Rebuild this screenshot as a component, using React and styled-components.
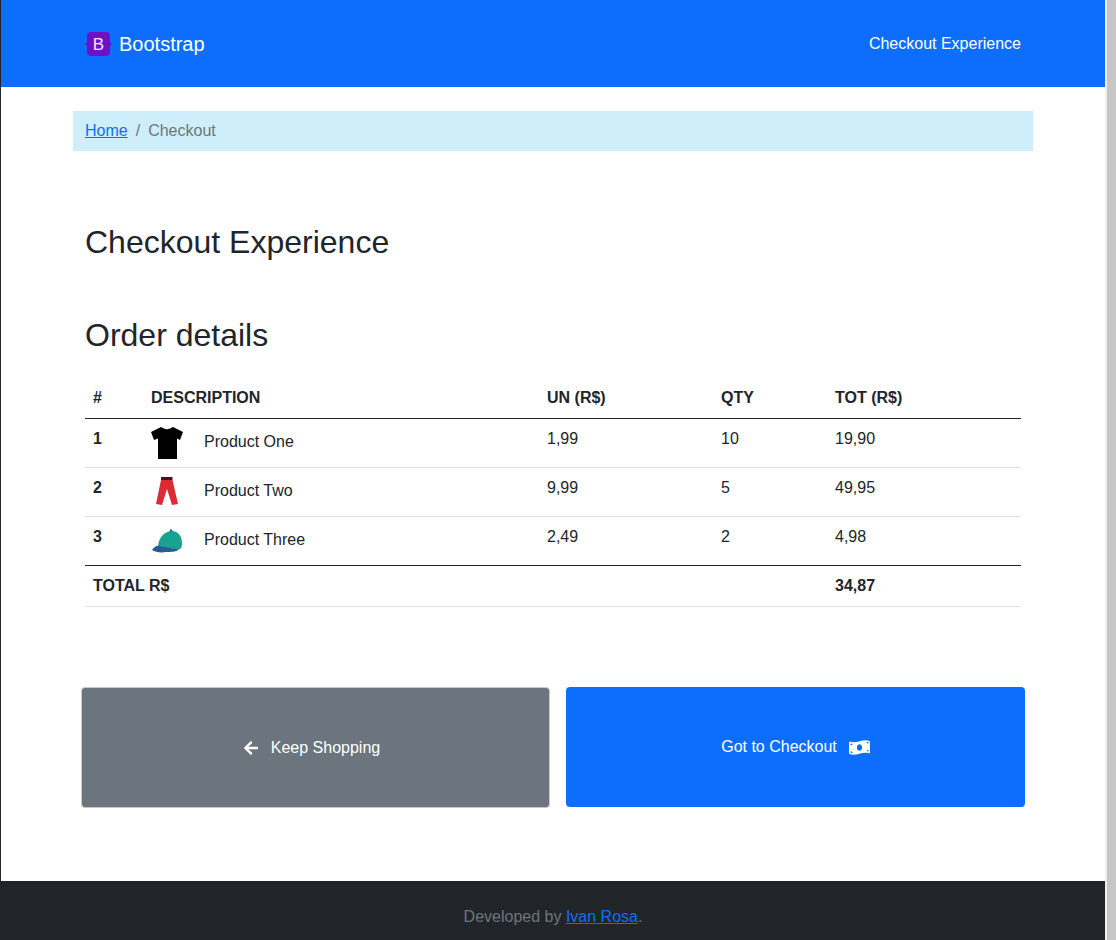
import React from "react";
import styled, { createGlobalStyle } from "styled-components";
import { FaArrowLeft, FaMoneyBillWave } from "react-icons/fa";

const GlobalStyle = createGlobalStyle`
  html, body {
    margin: 0;
    padding: 0;
    background: #fff;
  }
  body {
    font-family: "Liberation Sans", Arial, sans-serif;
    font-size: 16px;
    line-height: 24px;
    color: #212529;
  }
  * {
    box-sizing: border-box;
  }
`;

const Frame = styled.div`
  display: flex;
  height: 940px;
  overflow: hidden;
  border-left: 1px solid #212529;
`;

const Page = styled.div`
  flex: 1;
  min-width: 0;
`;

const Scrollbar = styled.div`
  flex: 0 0 11px;
  background: #c6c6c6;
  border-left: 2px solid #f1f1e4;
`;

const Container = styled.div`
  width: 960px;
  margin: 0 auto;
  padding: 0 12px;
`;

const NavBar = styled.header`
  height: 87px;
  background: #0d6efd;
  color: #fff;
`;

const NavInner = styled(Container)`
  height: 87px;
  display: flex;
  align-items: center;
  justify-content: space-between;
`;

const Brand = styled.div`
  display: flex;
  align-items: center;
  gap: 7px;
  font-size: 20px;
`;

const Crumbs = styled.nav`
  width: 960px;
  height: 40px;
  margin: 24px auto 0;
  padding: 8px 12px;
  display: flex;
  background: #cfeefb;
`;

const TextLink = styled.a`
  color: #0d6efd;
  text-decoration: underline;
`;

const CrumbSep = styled.span`
  color: #6c757d;
  padding: 0 8px;
`;

const CrumbActive = styled.span`
  color: #6c757d;
`;

const Title = styled.h1`
  margin: 72px 0 0;
  font-size: 32px;
  line-height: 38px;
  font-weight: 400;
`;

const SubTitle = styled.h2`
  margin: 55px 0 0;
  font-size: 32px;
  line-height: 38px;
  font-weight: 400;
`;

const Table = styled.table`
  width: 936px;
  margin-top: 24px;
  border-collapse: collapse;
  table-layout: fixed;
`;

const HeadCell = styled.th`
  padding: 8px;
  text-align: left;
  font-weight: 700;
  border-bottom: 1px solid #212529;
`;

const Cell = styled.td`
  padding: 8px;
  vertical-align: top;
  border-bottom: 1px solid ${(p) => (p.$dark ? "#212529" : "#dee2e6")};
  font-weight: ${(p) => (p.$bold ? 700 : 400)};
`;

const TotalCell = styled.td`
  padding: 8px;
  font-weight: 700;
  border-bottom: 1px solid #dee2e6;
`;

const Thumb = styled.svg`
  display: inline-block;
  width: 32px;
  height: 32px;
  margin-right: 21px;
  vertical-align: middle;
`;

const Actions = styled.div`
  display: flex;
  align-items: flex-start;
  gap: 16px;
  margin: 80px -4px 0;
`;

const ActionButton = styled.button`
  flex: 1;
  height: ${(p) => (p.$secondary ? "121px" : "120px")};
  padding: ${(p) => (p.$secondary ? "0 8px 0 0" : "0")};
  display: flex;
  align-items: center;
  justify-content: center;
  gap: 12px;
  font: inherit;
  color: #fff;
  background: ${(p) => (p.$secondary ? "#6c757d" : "#0d6efd")};
  border: ${(p) => (p.$secondary ? "1px solid #c8c8c8" : "0")};
  border-radius: 4px;
`;

const Footer = styled.footer`
  height: 59px;
  margin-top: 73px;
  padding-top: 24px;
  text-align: center;
  color: #6c757d;
  background: #212529;
`;

const BrandLogo = () => (
  <svg width="27" height="26" viewBox="0 0 27 26">
    <path d="M6 1h15a4 4 0 0 1 4 4v6l2 2-2 2v6a4 4 0 0 1-4 4H6a4 4 0 0 1-4-4v-6l-2-2 2-2V5a4 4 0 0 1 4-4z" fill="#6f10c8" />
    <text x="13.5" y="18.5" textAnchor="middle" fontSize="17" fontFamily="Liberation Sans, sans-serif" fill="#f3e6ff">B</text>
  </svg>
);

const Shirt = () => (
  <Thumb viewBox="0 0 32 32">
    <path d="M10 0l3 1.5q3 1.5 6 0L22 0l10 5-3 8-3-1.5V32H7V11.5L3 13 0 5z" fill="#000" />
  </Thumb>
);

const Pants = () => (
  <Thumb viewBox="0 0 32 32">
    <path d="M10 4h11.5l5.5 24-6 1-5-16-5 16-6-1z" fill="#dc2b35" />
    <path d="M10 1h11.5v3H10z" fill="#4a1218" />
  </Thumb>
);

const Cap = () => (
  <Thumb viewBox="0 0 32 32">
    <path d="M7 21C8 11 15 6 21 6c6 0 10 5 10 12 0 3-1 6-2 6-7 1-15-2-22-3z" fill="#17a291" />
    <path d="M1 25c2-3 5-5 8-4 7 1 14 3 19 3-2 3-8 3-13 3-5 1-11 0-14-2z" fill="#2a5a92" />
    <circle cx="20" cy="5.5" r="1.2" fill="#2a5a92" />
  </Thumb>
);

const products = [
  { id: 1, name: "Product One", unit: "1,99", qty: "10", total: "19,90", Icon: Shirt },
  { id: 2, name: "Product Two", unit: "9,99", qty: "5", total: "49,95", Icon: Pants },
  { id: 3, name: "Product Three", unit: "2,49", qty: "2", total: "4,98", Icon: Cap },
];

const App = () => {
  return (
    <Frame>
      <GlobalStyle />
      <Page>
        <NavBar>
          <NavInner>
            <Brand>
              <BrandLogo />
              Bootstrap
            </Brand>
            <span>Checkout Experience</span>
          </NavInner>
        </NavBar>
        <Crumbs>
          <TextLink href="#">Home</TextLink>
          <CrumbSep>/</CrumbSep>
          <CrumbActive>Checkout</CrumbActive>
        </Crumbs>
        <Container>
          <Title>Checkout Experience</Title>
          <SubTitle>Order details</SubTitle>
          <Table>
            <colgroup>
              <col style={{ width: 58 }} />
              <col style={{ width: 396 }} />
              <col style={{ width: 174 }} />
              <col style={{ width: 114 }} />
              <col style={{ width: 194 }} />
            </colgroup>
            <thead>
              <tr>
                <HeadCell>#</HeadCell>
                <HeadCell>DESCRIPTION</HeadCell>
                <HeadCell>UN (R$)</HeadCell>
                <HeadCell>QTY</HeadCell>
                <HeadCell>TOT (R$)</HeadCell>
              </tr>
            </thead>
            <tbody>
              {products.map(({ id, name, unit, qty, total, Icon }, i) => {
                const last = i === products.length - 1;
                return (
                  <tr key={id}>
                    <Cell $bold $dark={last}>{id}</Cell>
                    <Cell $dark={last}><Icon />{name}</Cell>
                    <Cell $dark={last}>{unit}</Cell>
                    <Cell $dark={last}>{qty}</Cell>
                    <Cell $dark={last}>{total}</Cell>
                  </tr>
                );
              })}
              <tr>
                <TotalCell colSpan={4}>TOTAL R$</TotalCell>
                <TotalCell>34,87</TotalCell>
              </tr>
            </tbody>
          </Table>
          <Actions>
            <ActionButton $secondary>
              <FaArrowLeft size={16} />
              Keep Shopping
            </ActionButton>
            <ActionButton>
              Got to Checkout
              <FaMoneyBillWave size={21} />
            </ActionButton>
          </Actions>
        </Container>
        <Footer>
          Developed by <TextLink href="#">Ivan Rosa</TextLink>.
        </Footer>
      </Page>
      <Scrollbar />
    </Frame>
  );
};

export default App;
